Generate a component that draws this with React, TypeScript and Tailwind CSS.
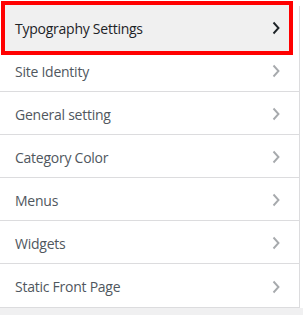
const items = [
  "Typography Settings",
  "Site Identity",
  "General setting",
  "Category Color",
  "Menus",
  "Widgets",
  "Static Front Page",
];

function Chevron({ active }: { active: boolean }) {
  return (
    <svg width="10" height="14" viewBox="0 0 10 14" fill="none">
      <path
        d="M2.5 1.5 L7.5 7 L2.5 12.5"
        stroke={active ? "#1d2327" : "#a7aaad"}
        strokeWidth="1.9"
      />
    </svg>
  );
}

export default function App() {
  return (
    <div className="w-[303px] h-[315px] bg-[#f0f0f1] flex flex-col font-['Open_Sans',sans-serif]">
      <div className="relative bg-white pt-[6px] pr-[3px]">
        {/* highlight annotation */}
        <div className="absolute left-[1px] top-[1px] w-[292px] h-[54px] border-4 border-[#ff0000] bg-[#f0f0f0]" />
        <ul className="relative w-[300px] border-r border-b border-[#dcdcde]">
          {items.map((label, i) => (
            <li
              key={label}
              className={`h-[43px] pt-[2px] flex items-center justify-between pl-[15px] pr-[18px] ${
                i === items.length - 1 ? "" : "border-b"
              } ${i === 0 ? "border-transparent" : "border-[#dcdcde]"}`}
            >
              <span
                className={`text-[14px] tracking-[-0.25px] ${
                  i === 0 ? "text-[#1d2327]" : "text-[#50575e]"
                }`}
              >
                {label}
              </span>
              <Chevron active={i === 0} />
            </li>
          ))}
        </ul>
      </div>
    </div>
  );
}
